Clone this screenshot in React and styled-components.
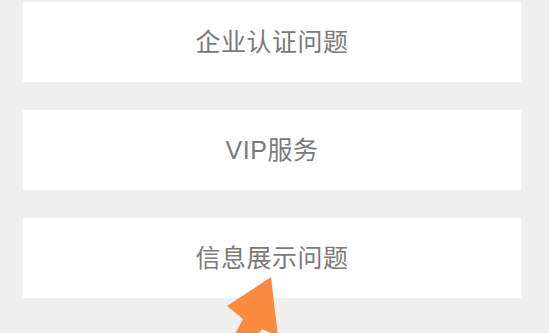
import React from 'react';
import styled, { createGlobalStyle } from 'styled-components';

const GlobalStyle = createGlobalStyle`
  html, body {
    margin: 0;
    padding: 0;
    background: #f0f0f0;
    font-family: 'Liberation Sans', 'Noto Sans CJK SC', sans-serif;
  }
`;

const Page = styled.div`
  position: relative;
  width: 549px;
  height: 333px;
  overflow: hidden;
  background: #f0f0f0;
  display: flex;
  flex-direction: column;
  gap: 28px;
  padding: 2px 28px 0 23px;
  box-sizing: border-box;
`;

const Card = styled.div`
  height: 80px;
  padding-bottom: 4px;
  box-sizing: border-box;
  background: #ffffff;
  display: flex;
  align-items: center;
  justify-content: center;
  font-size: 25px;
  color: #7a7a7a;
  letter-spacing: 0.5px;
`;

const Arrow = styled.svg`
  position: absolute;
  left: 0;
  top: 0;
  pointer-events: none;
`;

const items = ['企业认证问题', 'VIP服务', '信息展示问题'];

export default function App() {
  return (
    <>
      <GlobalStyle />
      <Page>
        {items.map((t) => (
          <Card key={t}>{t}</Card>
        ))}
        <Arrow width="549" height="333" viewBox="0 0 549 333">
          <polygon
            points="271,277 278,336 262,329 250,345 232,340 243,319 227,306"
            fill="#f98a3e"
          />
        </Arrow>
      </Page>
    </>
  );
}
